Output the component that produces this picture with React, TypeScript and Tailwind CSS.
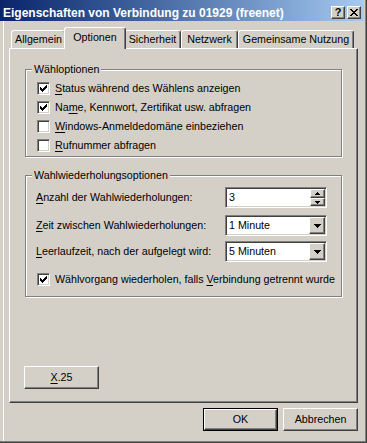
import React from "react";

const raised =
  "border border-t-white border-l-white border-r-[#404040] border-b-[#404040] shadow-[inset_-1px_-1px_0_#808080] bg-[#d4d0c8]";
const sunken =
  "border border-t-[#808080] border-l-[#808080] border-r-white border-b-white shadow-[inset_1px_1px_0_#404040,inset_-1px_-1px_0_#d4d0c8]";

function U({ children }: { children: React.ReactNode }) {
  return <span className="underline decoration-1 underline-offset-[2px]">{children}</span>;
}

function CheckMark() {
  const ys = [2, 3, 4, 3, 2, 1, 0];
  return (
    <svg width="7" height="7" viewBox="0 0 7 7" shapeRendering="crispEdges">
      {ys.map((y, i) => (
        <rect key={i} x={i} y={y} width="1" height="3" fill="#000" />
      ))}
    </svg>
  );
}

function CheckBox({ checked, children }: { checked?: boolean; children: React.ReactNode }) {
  return (
    <div className="flex h-[13px] items-center gap-[5px]">
      <span className={`flex h-[13px] w-[13px] shrink-0 items-center justify-center bg-white ${sunken}`}>
        {checked && <CheckMark />}
      </span>
      <span className="whitespace-nowrap leading-[13px]">{children}</span>
    </div>
  );
}

function DownArrow() {
  return (
    <svg width="7" height="4" viewBox="0 0 7 4" shapeRendering="crispEdges">
      <rect x="0" y="0" width="7" height="1" fill="#000" />
      <rect x="1" y="1" width="5" height="1" fill="#000" />
      <rect x="2" y="2" width="3" height="1" fill="#000" />
      <rect x="3" y="3" width="1" height="1" fill="#000" />
    </svg>
  );
}

function SmallArrow({ up }: { up?: boolean }) {
  return (
    <svg width="5" height="3" viewBox="0 0 5 3" shapeRendering="crispEdges">
      <rect x="0" y={up ? 2 : 0} width="5" height="1" fill="#000" />
      <rect x="1" y="1" width="3" height="1" fill="#000" />
      <rect x="2" y={up ? 0 : 2} width="1" height="1" fill="#000" />
    </svg>
  );
}

function Combo({ value }: { value: string }) {
  return (
    <div className={`flex h-[21px] w-[102px] bg-white p-[1px] ${sunken}`}>
      <span className="flex-1 pl-[2px] leading-[17px]">{value}</span>
      <span className={`flex h-[17px] w-[16px] items-center justify-center ${raised}`}>
        <DownArrow />
      </span>
    </div>
  );
}

function Spin({ value }: { value: string }) {
  return (
    <div className={`flex h-[21px] w-[102px] bg-white p-[1px] ${sunken}`}>
      <span className="flex-1 pl-[2px] leading-[17px]">{value}</span>
      <div className="flex w-[15px] flex-col">
        <span className={`flex h-[9px] items-center justify-center ${raised}`}>
          <SmallArrow up />
        </span>
        <span className={`flex h-[8px] items-center justify-center ${raised}`}>
          <SmallArrow />
        </span>
      </div>
    </div>
  );
}

function GroupBox({ title, className, children }: { title: string; className: string; children: React.ReactNode }) {
  return (
    <div
      className={`ml-[15px] w-[317px] border border-[#808080] shadow-[inset_1px_1px_0_white,1px_1px_0_white] ${className}`}
    >
      <div className="-mt-[7px] ml-[6px] w-fit bg-[#d4d0c8] px-[2px] leading-[13px]">{title}</div>
      {children}
    </div>
  );
}

function Button({ children, isDefault }: { children: React.ReactNode; isDefault?: boolean }) {
  if (isDefault) {
    return (
      <div className="h-[23px] w-[75px] border border-black">
        <div className={`flex h-full w-full items-center justify-center ${raised}`}>{children}</div>
      </div>
    );
  }
  return <div className={`flex h-[23px] w-[75px] items-center justify-center ${raised}`}>{children}</div>;
}

const tabs = [
  { label: "Allgemein", w: "w-[55px]" },
  { label: "Optionen", w: "w-[62px]", selected: true },
  { label: "Sicherheit", w: "w-[57px]" },
  { label: "Netzwerk", w: "w-[57px]" },
  { label: "Gemeinsame Nutzung", w: "w-[116px]" },
];

export default function App() {
  return (
    <div className="h-[443px] w-[367px] border-r border-b border-[#404040] bg-[#d4d0c8] font-['Liberation_Sans',Arial,sans-serif] text-[10.7px] text-black">
      <div className="flex h-full flex-col border-r border-b border-[#808080]">
        {/* caption */}
        <div className="mr-[1px] flex h-[21px] shrink-0 items-center bg-gradient-to-r from-[#0a246a] to-[#a6caf0] pt-[4px] pr-[3px] pl-[3px]">
          <span className="flex-1 whitespace-nowrap text-[12px] font-bold leading-[14px] text-white">
            Eigenschaften von Verbindung zu 01929 (freenet)
          </span>
          <div className="flex gap-[2px]">
            <span className={`flex h-[13px] w-[14px] items-center justify-center text-[11px] font-bold leading-none ${raised}`}>
              ?
            </span>
            <span className={`flex h-[13px] w-[14px] items-center justify-center ${raised}`}>
              <svg width="8" height="7" viewBox="0 0 8 7" shapeRendering="crispEdges">
                <rect x="0" y="0" width="2" height="1" />
                <rect x="6" y="0" width="2" height="1" />
                <rect x="1" y="1" width="2" height="1" />
                <rect x="5" y="1" width="2" height="1" />
                <rect x="2" y="2" width="4" height="1" />
                <rect x="3" y="3" width="2" height="1" />
                <rect x="2" y="4" width="4" height="1" />
                <rect x="1" y="5" width="2" height="1" />
                <rect x="5" y="5" width="2" height="1" />
                <rect x="0" y="6" width="2" height="1" />
                <rect x="6" y="6" width="2" height="1" />
              </svg>
            </span>
          </div>
        </div>

        {/* body */}
        <div className="ml-[3px] flex flex-1 flex-col border-l border-white pt-[6px] pl-[5px]">
          <div className="flex h-[21px] items-end pl-[2px]">
            {tabs.map((t) => (
              <div
                key={t.label}
                className={`flex items-center justify-center whitespace-nowrap rounded-t-[3px] border-t border-r border-l border-t-white border-r-[#404040] border-l-white bg-[#d4d0c8] shadow-[inset_-1px_0_0_#808080] ${t.w} ${
                  t.selected ? "relative z-10 -mx-[2px] mb-[-1px] h-[22px] pb-[3px]" : "h-[18px]"
                }`}
              >
                {t.label}
              </div>
            ))}
          </div>

          <div className="flex h-[355px] w-[349px] flex-col border border-t-white border-r-[#404040] border-b-[#404040] border-l-white shadow-[inset_-1px_-1px_0_#808080]">
            <GroupBox title="Wähloptionen" className="mt-[20px] h-[88px]">
              <div className="mt-[6px] flex flex-col gap-[6px] pl-[11px]">
                <CheckBox checked>
                  <U>S</U>tatus während des Wählens anzeigen
                </CheckBox>
                <CheckBox checked>
                  Na<U>m</U>e, Kennwort, Zertifikat usw. abfragen
                </CheckBox>
                <CheckBox>
                  <U>W</U>indows-Anmeldedomäne einbeziehen
                </CheckBox>
                <CheckBox>
                  <U>R</U>ufnummer abfragen
                </CheckBox>
              </div>
            </GroupBox>

            <GroupBox title="Wahlwiederholungsoptionen" className="mt-[18px] h-[122px]">
              <div className="mt-[5px] flex flex-col pl-[10px]">
                <div className="flex items-center">
                  <span className="w-[189px] whitespace-nowrap">
                    <U>A</U>nzahl der Wahlwiederholungen:
                  </span>
                  <Spin value="3" />
                </div>
                <div className="mt-[7px] flex items-center">
                  <span className="w-[189px] whitespace-nowrap">
                    <U>Z</U>eit zwischen Wahlwiederholungen:
                  </span>
                  <Combo value="1 Minute" />
                </div>
                <div className="mt-[5px] flex items-center">
                  <span className="w-[189px] whitespace-nowrap">
                    <U>L</U>eerlaufzeit, nach der aufgelegt wird:
                  </span>
                  <Combo value="5 Minuten" />
                </div>
                <div className="mt-[11px] pl-[1px]">
                  <CheckBox checked>
                    Wählvorgang wiederholen, falls <U>V</U>erbindung getrennt wurde
                  </CheckBox>
                </div>
              </div>
            </GroupBox>

            <div className="mt-[69px] ml-[14px]">
              <Button>
                <U>X</U>.25
              </Button>
            </div>
          </div>

          <div className="mt-[5px] flex w-[349px] justify-end gap-[5px]">
            <Button isDefault>OK</Button>
            <Button>Abbrechen</Button>
          </div>
        </div>
      </div>
    </div>
  );
}
